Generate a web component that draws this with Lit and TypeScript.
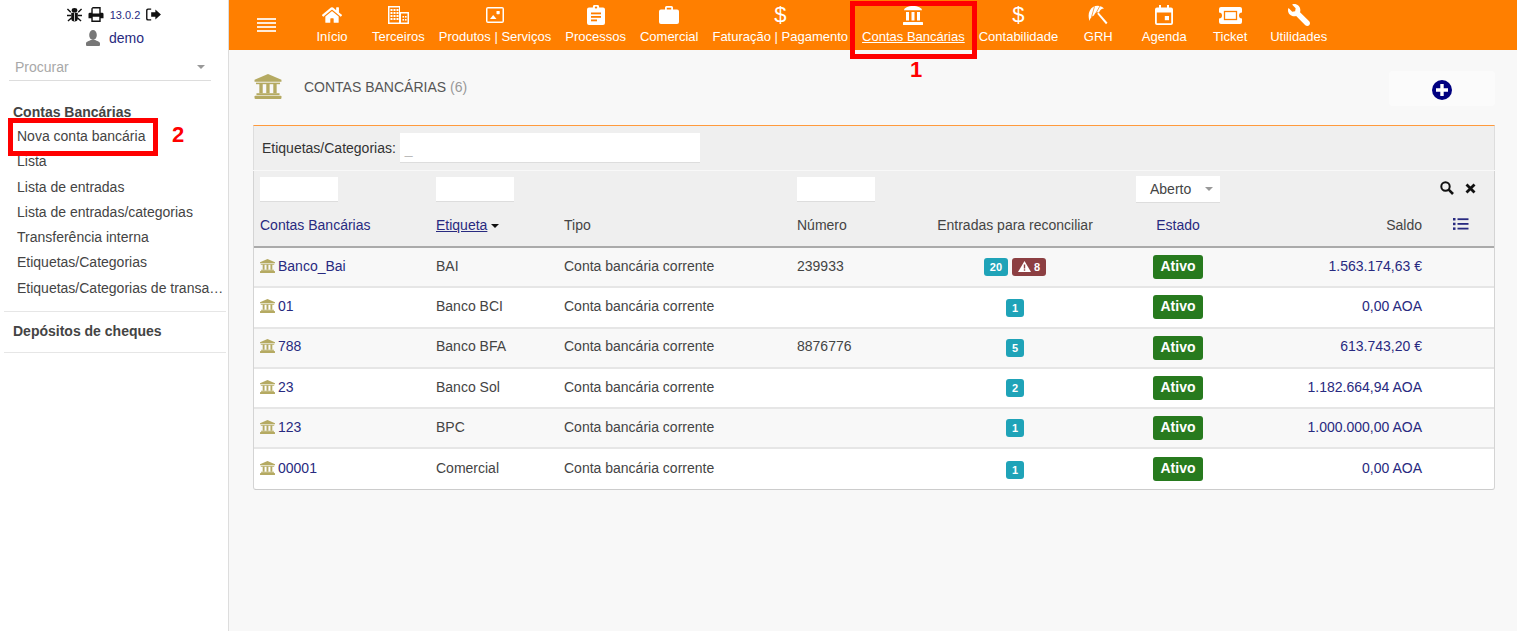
import { LitElement, html, css, svg } from "lit";
import { customElement } from "lit/decorators.js";

const bank = (cls: string) => html`<svg class=${cls} viewBox="0 0 28 26" fill="currentColor">
  <path d="M14 0 L28 6 V8 H0 V6 Z" />
  <rect x="1.5" y="9" width="25" height="1.6" />
  <rect x="5" y="10" width="3.5" height="10" />
  <rect x="12.2" y="10" width="3.5" height="10" />
  <rect x="19.5" y="10" width="3.5" height="10" />
  <rect x="2" y="20" width="24" height="2" />
  <rect x="0" y="22.5" width="28" height="3.5" rx="1" />
</svg>`;

const navIcons: Record<string, unknown> = {
  home: html`<svg width="20" height="18" viewBox="0 0 576 512" fill="#fff"><path d="M280.37 148.26L96 300.11V464a16 16 0 0 0 16 16l112.06-.29a16 16 0 0 0 15.92-16V368a16 16 0 0 1 16-16h64a16 16 0 0 1 16 16v95.64a16 16 0 0 0 16 16.05L464 480a16 16 0 0 0 16-16V300L295.67 148.26a12.19 12.19 0 0 0-15.3 0zM571.6 251.47L488 182.56V44.05a12 12 0 0 0-12-12h-56a12 12 0 0 0-12 12v72.61L318.47 43a48 48 0 0 0-61 0L4.34 251.47a12 12 0 0 0-1.6 16.9l25.5 31A12 12 0 0 0 45.15 301l235.22-193.74a12.19 12.19 0 0 1 15.3 0L530.9 301a12 12 0 0 0 16.9-1.6l25.5-31a12 12 0 0 0-1.7-16.93z"/></svg>`,
  building: html`<svg width="21" height="18" viewBox="0 0 21 18" fill="#fff">
    <path d="M0 0H12V6H21V18H0ZM1.5 1.5V16.5H11V1.5ZM13 7.5V16.5H19.5V7.5Z" fill-rule="evenodd" />
    ${[3, 6, 9].map((x) => [3, 6, 9, 12].map((y) => svg`<rect x=${x - 0.5} y=${y} width="2" height="2" />`))}
    ${[14.5, 17].map((x) => [10, 13].map((y) => svg`<rect x=${x} y=${y} width="1.6" height="1.6" />`))}
  </svg>`,
  image: html`<svg width="18" height="16" viewBox="0 0 18 16" fill="#fff">
    <path d="M2 0H16a2 2 0 0 1 2 2V14a2 2 0 0 1-2 2H2a2 2 0 0 1-2-2V2a2 2 0 0 1 2-2ZM1.5 1.5V14.5H16.5V1.5Z" fill-rule="evenodd" />
    <rect x="10.5" y="4" width="3.2" height="3.2" rx="0.6" />
    <path d="M4 12 L7.2 8 L10.5 12Z" />
  </svg>`,
  clipboard: html`<svg width="18" height="20" viewBox="0 0 18 20" fill="#fff">
    <path d="M2 2.5H5.8a3.2 3.2 0 0 1 6.4 0H16a2 2 0 0 1 2 2V18a2 2 0 0 1-2 2H2a2 2 0 0 1-2-2V4.500a2 2 0 0 1 2-2Z" />
    <rect x="7.800" y="1.500" width="2.400" height="2" fill="#ff7f00" rx="1" />
    <rect x="4" y="7.500" width="10" height="1.800" fill="#ff7f00" />
    <rect x="4" y="11" width="10" height="1.800" fill="#ff7f00" />
    <rect x="4" y="14.500" width="6" height="1.800" fill="#ff7f00" />
  </svg>`,
  briefcase: html`<svg width="20" height="18" viewBox="0 0 20 18" fill="#fff">
    <path d="M6 3.500V1.500A1.500 1.500 0 0 1 7.500 0h5A1.500 1.500 0 0 1 14 1.500V3.500H18a2 2 0 0 1 2 2V16a2 2 0 0 1-2 2H2a2 2 0 0 1-2-2V5.500a2 2 0 0 1 2-2ZM7.800 1.800V3.500H12.200V1.800Z" fill-rule="evenodd" />
  </svg>`,
  dollar: html`<span class="dollar">$</span>`,
  bank: html`<svg width="20" height="19" viewBox="0 0 20 19" fill="#fff">
    <path d="M1 4.200C1 2 5 0 10 0S19 2 19 4.200Z" />
    <rect x="3" y="6" width="3" height="8.500" />
    <rect x="8.500" y="6" width="3" height="8.500" />
    <rect x="14" y="6" width="3" height="8.500" />
    <rect x="0" y="16" width="20" height="3" rx="0.500" />
  </svg>`,
  beach: html`<svg width="20" height="20" viewBox="0 0 20 20" fill="#fff">
    <path d="M1.500 16C-0.500 10 1 4.500 5 2C9 -0.300 13 0.500 16 3.500Q12.500 3.500 11 7.500Q7.500 6.500 6 10.500Q2.500 11.500 1.500 16Z" />
    <path d="M3.500 12L6.500 1.500M8 8L12 0.800" stroke="#ff7f00" stroke-width="0.700" fill="none" />
    <path d="M9.200 8.800L10.600 7.400L19.500 17.800L18 19.200Z" />
  </svg>`,
  calendar: html`<svg width="18" height="20" viewBox="0 0 18 20" fill="#fff">
    <path d="M4 0h2V2.500H12V0h2V2.500H16a2 2 0 0 1 2 2V18a2 2 0 0 1-2 2H2a2 2 0 0 1-2-2V4.500a2 2 0 0 1 2-2H4ZM1.800 7.500V18.200H16.200V7.500Z" fill-rule="evenodd" />
    <rect x="9.800" y="11" width="4.200" height="4.200" />
  </svg>`,
  ticket: html`<svg width="23" height="17" viewBox="0 0 23 17" fill="#fff">
    <path d="M2 0H21a2 2 0 0 1 2 2V5.500a3 3 0 0 0 0 6V15a2 2 0 0 1-2 2H2a2 2 0 0 1-2-2V11.500a3 3 0 0 0 0-6V2a2 2 0 0 1 2-2Z" />
    <rect x="5.500" y="4.500" width="12" height="8" fill="none" stroke="#ff7f00" stroke-width="1.300" />
  </svg>`,
  wrench: html`<svg width="22" height="22" viewBox="0 0 512 512" fill="#fff" style="transform:scaleX(-1)"><path d="M507.730 109.100c-2.240-9.030-13.540-12.090-20.120-5.510l-74.360 74.360-67.880-11.310-11.310-67.880 74.360-74.360c6.620-6.620 3.430-17.900-5.660-20.160-47.380-11.740-99.550.91-136.580 37.930-39.640 39.640-50.550 97.100-34.050 147.200L18.740 402.760c-24.990 24.990-24.990 65.510 0 90.500 24.990 24.990 65.510 24.990 90.500 0l213.210-213.210c50.120 16.710 107.470 5.680 147.370-34.220 37.070-37.070 49.700-89.320 37.910-136.730z"/></svg>`,
};

const navItems = [
  ["home", "Início"],
  ["building", "Terceiros"],
  ["image", "Produtos | Serviços"],
  ["clipboard", "Processos"],
  ["briefcase", "Comercial"],
  ["dollar", "Faturação | Pagamento"],
  ["bank", "Contas Bancárias"],
  ["dollar", "Contabilidade"],
  ["beach", "GRH"],
  ["calendar", "Agenda"],
  ["ticket", "Ticket"],
  ["wrench", "Utilidades"],
];

const menu = [
  "Nova conta bancária",
  "Lista",
  "Lista de entradas",
  "Lista de entradas/categorias",
  "Transferência interna",
  "Etiquetas/Categorias",
  "Etiquetas/Categorias de transa…",
];

const rows = [
  { ref: "Banco_Bai", label: "BAI", num: "239933", open: "20", late: "8", bal: "1.563.174,63 €" },
  { ref: "01", label: "Banco BCI", num: "", open: "1", late: "", bal: "0,00 AOA" },
  { ref: "788", label: "Banco BFA", num: "8876776", open: "5", late: "", bal: "613.743,20 €" },
  { ref: "23", label: "Banco Sol", num: "", open: "2", late: "", bal: "1.182.664,94 AOA" },
  { ref: "123", label: "BPC", num: "", open: "1", late: "", bal: "1.000.000,00 AOA" },
  { ref: "00001", label: "Comercial", num: "", open: "1", late: "", bal: "0,00 AOA" },
];

@customElement("app-root")
export class AppRoot extends LitElement {
  static styles = css`
    :host {
      display: flex;
      position: relative;
      height: 631px;
      overflow: hidden;
      font-family: "Liberation Sans", Arial, sans-serif;
      font-size: 14px;
      color: #444;
      background: #f8f8f8;
    }
    a {
      color: #282a80;
      text-decoration: none;
    }

    /* left menu */
    .side {
      width: 229px;
      flex: none;
      box-sizing: border-box;
      background: #fff;
      border-right: 1px solid #ddd;
    }
    .login {
      display: flex;
      align-items: center;
      justify-content: center;
      height: 17px;
      padding-top: 6px;
      gap: 6px;
      font-size: 11px;
      color: #282a80;
    }
    .login svg {
      display: block;
    }
    .user {
      display: flex;
      align-items: center;
      justify-content: center;
      gap: 8px;
      height: 16px;
      margin-top: 7px;
      padding-left: 1px;
      color: #282a80;
    }
    .search {
      display: flex;
      align-items: center;
      justify-content: space-between;
      box-sizing: border-box;
      width: 202px;
      height: 27px;
      margin: 8px 17px 0 9px;
      padding: 0 6px;
      border-bottom: 1px solid #ddd;
      color: #a8a8a8;
    }
    .caret {
      width: 0;
      height: 0;
      border-left: 4.5px solid transparent;
      border-right: 4.5px solid transparent;
      border-top: 4.5px solid #999;
    }
    .block {
      margin: 0 2px 0 4px;
      padding: 0 2px 0 9px;
      border-bottom: 1px solid #e6e6e6;
    }
    .block.first {
      padding-top: 22px;
      padding-bottom: 10px;
    }
    .block.second {
      padding-top: 10px;
      padding-bottom: 12px;
    }
    .block h4 {
      margin: 0;
      font-size: 14px;
      line-height: 18px;
      font-weight: 700;
      color: #444;
    }
    .block ul {
      list-style: none;
      margin: 3px 0 0;
      padding: 0 0 0 4px;
    }
    .block li {
      height: 25.3px;
      line-height: 25.3px;
      color: #444;
      white-space: nowrap;
    }

    /* main column */
    .main {
      flex: 1;
      min-width: 0;
    }
    .top {
      display: flex;
      height: 50px;
      background: #ff7f00;
    }
    .burger {
      width: 70px;
      flex: none;
      display: flex;
      align-items: center;
      padding-left: 28px;
      box-sizing: border-box;
    }
    .nav-item {
      min-width: 66px;
      box-sizing: border-box;
      padding: 4px 7px 0;
      display: flex;
      flex-direction: column;
      align-items: center;
      font-size: 13px;
      color: #fff;
      white-space: nowrap;
    }
    .nav-icon {
      height: 22px;
      display: flex;
      align-items: center;
      justify-content: center;
    }
    .nav-label {
      margin-top: 3px;
      line-height: 15px;
    }
    .nav-item.on .nav-label {
      text-decoration: underline;
    }
    .dollar {
      font-size: 22px;
      line-height: 22px;
      font-weight: 400;
    }

    .content {
      padding: 21px 22px 0 25px;
    }
    .title {
      display: flex;
      align-items: center;
      height: 35px;
      margin-bottom: 19px;
    }
    .title-bank {
      width: 28px;
      height: 25px;
      color: #b5aa62;
      margin: 0 22px 4px 0;
    }
    .title span {
      color: #555;
      margin-bottom: 4px;
    }
    .title em {
      font-style: normal;
      color: #999;
      margin: 0 0 4px 4px;
    }
    .add {
      margin-left: auto;
      width: 106px;
      height: 35px;
      background: #fbfbfb;
      border-radius: 4px;
      display: flex;
      align-items: center;
      justify-content: center;
      padding-top: 2px;
      box-sizing: border-box;
    }

    .filters {
      display: flex;
      align-items: center;
      gap: 4px;
      height: 44px;
      margin: 0 0 1px -1px;
      padding-left: 8px;
      background: #efefef;
      border-top: 1px solid #ff9a3c;
      border-left: 1px solid #ddd;
      border-right: 1px solid #ddd;
      color: #333;
    }
    .field {
      display: block;
      box-sizing: border-box;
      background: #fff;
      border-bottom: 1px solid #ddd;
      color: #bbb;
    }
    .filters .field {
      width: 300px;
      height: 30px;
      padding: 6px 5px;
      line-height: 20px;
    }
    table {
      width: 1242px;
      margin-left: -1px;
      table-layout: fixed;
      border-collapse: separate;
      border-spacing: 0;
      border-left: 1px solid #d4d4d4;
      border-right: 1px solid #d4d4d4;
      border-bottom: 1px solid #ccc;
      border-radius: 0 0 3px 3px;
      background: #fff;
    }
    th,
    td {
      padding: 0 6px;
      font-weight: 400;
      text-align: left;
      white-space: nowrap;
    }
    thead tr {
      background: #efefef;
    }
    .filter-row th {
      box-sizing: border-box;
      height: 36px;
    }
    .filter-row .field {
      width: 78px;
      height: 25px;
    }
    .select {
      display: flex;
      align-items: center;
      justify-content: space-between;
      box-sizing: border-box;
      width: 84px;
      height: 27px;
      margin: 0 auto;
      padding: 0 7px 0 14px;
      background: #fff;
      border-bottom: 1px solid #ddd;
      color: #444;
    }
    .filter-row .tools {
      padding: 0 0 4px 12px;
    }
    .tools svg {
      margin-right: 7px;
      vertical-align: middle;
    }
    .head-row th {
      box-sizing: border-box;
      height: 41px;
      padding-bottom: 3px;
      border-bottom: 2px solid #aaa;
      color: #444;
    }
    .head-row .center {
      text-align: center;
    }
    .head-row .right {
      text-align: right;
    }
    .sorted {
      text-decoration: underline;
    }
    .sort-caret {
      display: inline-block;
      width: 0;
      height: 0;
      margin-left: 4px;
      vertical-align: 2px;
      border-left: 4px solid transparent;
      border-right: 4px solid transparent;
      border-top: 4px solid #111;
    }
    tbody td {
      box-sizing: border-box;
      height: 40.3px;
      padding-bottom: 3px;
      border-bottom: 2px solid #e6e6e6;
      color: #444;
    }
    tbody td.center {
      padding-bottom: 0;
      text-align: center;
    }
    tbody tr:nth-child(odd) {
      background: #f8f8f8;
    }
    tbody tr:last-child td {
      border-bottom: 0;
      height: 40px;
    }
    .row-bank {
      width: 15px;
      height: 14px;
      color: #b5aa62;
      margin-right: 3px;
      vertical-align: -2px;
    }
    tbody .bal {
      color: #282a80;
      text-align: right;
    }
    .badge {
      display: inline-block;
      padding: 0 6px;
      height: 18px;
      line-height: 18px;
      border-radius: 3px;
      font-size: 11px;
      font-weight: 700;
      color: #fff;
      background: #1fa3b8;
      text-align: center;
      vertical-align: middle;
    }
    .badge.late {
      background: #8c3f42;
    }
    .badge.late svg {
      vertical-align: -1px;
      margin-right: 3px;
    }
    .status {
      display: inline-block;
      padding: 0 7.5px;
      height: 24px;
      line-height: 23px;
      box-sizing: border-box;
      border-radius: 3px;
      background: #277a1e;
      color: #fff;
      font-weight: 700;
    }

    /* red marks drawn over the screenshot */
    .mark {
      position: absolute;
      box-sizing: border-box;
      border: 5px solid #f00;
    }
    .mark.one {
      left: 850px;
      top: 1px;
      width: 127px;
      height: 58px;
    }
    .mark.two {
      left: 8px;
      top: 118px;
      width: 150px;
      height: 38px;
    }
    .num {
      position: absolute;
      color: #f00;
      font-size: 22px;
      line-height: 22px;
      font-weight: 700;
    }
    .num.one {
      left: 910px;
      top: 59px;
    }
    .num.two {
      left: 172px;
      top: 124px;
    }
  `;

  render() {
    return html`
      <aside class="side">
        <div class="login">
          <svg width="15" height="15" viewBox="0 0 16 16" fill="#111">
            <ellipse cx="8" cy="3.500" rx="3" ry="2.500" />
            <path d="M4.500 6H11.500V12a3.500 3.500 0 0 1-7 0Z" />
            <path d="M0.500 2L4 5.500M15.500 2L12 5.500M0 9H4.500M16 9H11.500M1 15L5 11.500M15 15L11 11.500" stroke="#111" stroke-width="1.500" fill="none" />
            <rect x="7.600" y="6" width="0.800" height="9" fill="#fff" />
          </svg>
          <svg width="16" height="15" viewBox="0 0 16 16" fill="#111">
            <path d="M3 6V1.500L4.500 0H13V6H14.500A1.500 1.500 0 0 1 16 7.500V12H13V16H3V12H0V7.500A1.500 1.500 0 0 1 1.500 6ZM4.500 1.500V7H11.500V1.500ZM4.500 10.500V14.500H11.500V10.500Z" fill-rule="evenodd" />
          </svg>
          <span>13.0.2</span>
          <svg width="15" height="13" viewBox="0 0 16 14" fill="#111">
            <path d="M10 1.500L16 7L10 12.500V9.500H5.500V4.500H10Z" />
            <path d="M5.500 0.500H2A2 2 0 0 0 0 2.500V11.500A2 2 0 0 0 2 13.500H5.500V12H2.500A1 1 0 0 1 1.500 11V3A1 1 0 0 1 2.500 2H5.500Z" />
          </svg>
        </div>
        <div class="user">
          <svg width="16" height="16" viewBox="0 0 16 16" fill="#777">
            <ellipse cx="8" cy="5" rx="3.800" ry="5" />
            <path d="M1 15V13.500C1 11.500 4 11 6 10H10C12 11 15 11.500 15 13.500V15A1 1 0 0 1 14 16H2A1 1 0 0 1 1 15Z" />
          </svg>
          <a>demo</a>
        </div>
        <div class="search"><span>Procurar</span><i class="caret"></i></div>
        <div class="block first">
          <h4>Contas Bancárias</h4>
          <ul>
            ${menu.map((m) => html`<li>${m}</li>`)}
          </ul>
        </div>
        <div class="block second"><h4>Depósitos de cheques</h4></div>
      </aside>

      <div class="main">
        <header class="top">
          <div class="burger">
            <svg width="19" height="14" viewBox="0 0 19 14" fill="#fff" opacity="0.85">
              <rect width="19" height="2" />
              <rect y="4" width="19" height="2" />
              <rect y="8" width="19" height="2" />
              <rect y="12" width="19" height="2" />
            </svg>
          </div>
          ${navItems.map(
            ([icon, label]) => html`<div class="nav-item ${label === "Contas Bancárias" ? "on" : ""}">
              <div class="nav-icon">${navIcons[icon]}</div>
              <div class="nav-label">${label}</div>
            </div>`
          )}
        </header>

        <div class="content">
          <div class="title">
            ${bank("title-bank")}
            <span>CONTAS BANCÁRIAS</span><em>(6)</em>
            <div class="add">
              <svg width="20" height="20" viewBox="0 0 20 20">
                <circle cx="10" cy="10" r="10" fill="#000080" />
                <path d="M8.300 4H11.700V8.300H16V11.700H11.700V16H8.300V11.700H4V8.300H8.300Z" fill="#fff" />
              </svg>
            </div>
          </div>

          <div class="filters">
            <span>Etiquetas/Categorias:</span>
            <span class="field">_</span>
          </div>

          <table>
            <colgroup>
              <col style="width:176px" />
              <col style="width:128px" />
              <col style="width:233px" />
              <col style="width:134px" />
              <col style="width:180px" />
              <col style="width:146px" />
              <col style="width:177px" />
              <col style="width:66px" />
            </colgroup>
            <thead>
              <tr class="filter-row">
                <th><span class="field"></span></th>
                <th><span class="field"></span></th>
                <th></th>
                <th><span class="field"></span></th>
                <th></th>
                <th><span class="select">Aberto<i class="caret"></i></span></th>
                <th></th>
                <th class="tools">
                  <svg width="14" height="14" viewBox="0 0 14 14" fill="none" stroke="#111" stroke-width="2">
                    <circle cx="5.500" cy="5.500" r="4.200" />
                    <path d="M8.700 8.700L13 13" stroke-width="2.600" />
                  </svg>
                  <svg width="11" height="11" viewBox="0 0 11 11" stroke="#111" stroke-width="2.800">
                    <path d="M1.500 1.500L9.500 9.500M9.500 1.500L1.500 9.500" />
                  </svg>
                </th>
              </tr>
              <tr class="head-row">
                <th><a>Contas Bancárias</a></th>
                <th><a class="sorted">Etiqueta</a><i class="sort-caret"></i></th>
                <th>Tipo</th>
                <th>Número</th>
                <th class="center">Entradas para reconciliar</th>
                <th class="center"><a>Estado</a></th>
                <th class="right">Saldo</th>
                <th class="center">
                  <svg width="16" height="12" viewBox="0 0 16 12" fill="#282a80">
                    <rect width="2.500" height="2.500" />
                    <rect y="4.700" width="2.500" height="2.500" />
                    <rect y="9.400" width="2.500" height="2.500" />
                    <rect x="4.500" y="0.300" width="11" height="1.800" />
                    <rect x="4.500" y="5" width="11" height="1.800" />
                    <rect x="4.500" y="9.700" width="11" height="1.800" />
                  </svg>
                </th>
              </tr>
            </thead>
            <tbody>
              ${rows.map(
                (r) => html`<tr>
                  <td>${bank("row-bank")}<a>${r.ref}</a></td>
                  <td>${r.label}</td>
                  <td>Conta bancária corrente</td>
                  <td>${r.num}</td>
                  <td class="center">
                    <span class="badge">${r.open}</span>
                    ${r.late
                      ? html`<span class="badge late"><svg width="13" height="11" viewBox="0 0 13 11"><path d="M6.500 0L13 11H0Z" fill="#fff" /><rect x="5.800" y="3.500" width="1.400" height="4" fill="#8c3f42" /><rect x="5.800" y="8.300" width="1.400" height="1.400" fill="#8c3f42" /></svg>${r.late}</span>`
                      : ""}
                  </td>
                  <td class="center"><span class="status">Ativo</span></td>
                  <td class="bal">${r.bal}</td>
                  <td></td>
                </tr>`
              )}
            </tbody>
          </table>
        </div>
      </div>

      <div class="mark one"></div>
      <div class="num one">1</div>
      <div class="mark two"></div>
      <div class="num two">2</div>
    `;
  }
}
